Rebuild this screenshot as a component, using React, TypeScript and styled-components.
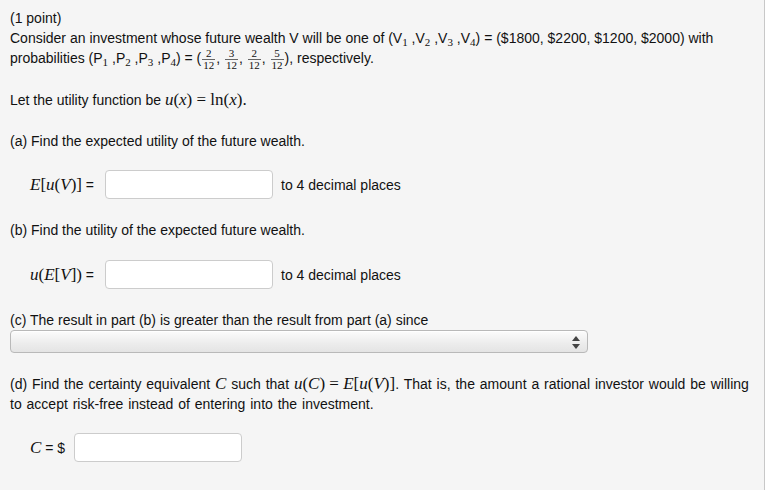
import React from 'react'
import styled, { createGlobalStyle } from 'styled-components'

const GlobalStyle = createGlobalStyle`
  html, body {
    margin: 0;
    padding: 0;
    background: #f5f5f5;
  }
`

const Page = styled.div`
  box-sizing: border-box;
  width: 765px;
  height: 490px;
  padding: 8px 0 0 10px;
  background: #f5f5f5;
  border-right: 1px solid #c8c8c8;
  font-family: 'Liberation Sans', Arial, sans-serif;
  font-size: 14px;
  color: #111;
  display: flex;
  flex-direction: column;
  overflow: hidden;
`

const Para = styled.div<{ $top?: number; $spread?: boolean }>`
  line-height: 20px;
  margin-top: ${({ $top }) => $top ?? 0}px;
  word-spacing: ${({ $spread }) => ($spread ? '1px' : 'normal')};
`

const FracLine = styled.div`
  height: 21px;
  line-height: 21px;
  white-space: nowrap;
`

const M = styled.span<{ $size?: number }>`
  font-family: 'Liberation Serif', 'Times New Roman', serif;
  font-style: italic;
  font-size: ${({ $size }) => $size ?? 17}px;
  word-spacing: normal;
`

const Rm = styled.span<{ $size?: number }>`
  font-family: 'Liberation Serif', 'Times New Roman', serif;
  font-size: ${({ $size }) => $size ?? 17}px;
  word-spacing: normal;
`

const Sub = styled.sub`
  font-family: 'Liberation Serif', 'Times New Roman', serif;
  font-size: 11px;
  vertical-align: -3px;
  line-height: 0;
`

const Frac = styled.span`
  display: inline-block;
  vertical-align: middle;
  text-align: center;
  font-family: 'Liberation Serif', 'Times New Roman', serif;
  font-size: 11px;
  line-height: 9px;
  margin: 0 1px;
`

const Num = styled.span`
  display: block;
  padding: 0 1px 1px;
  border-bottom: 1px solid #666;
`

const Den = styled.span`
  display: block;
  padding: 1px 1px 0;
`

const AnswerRow = styled.div<{ $top: number }>`
  display: flex;
  align-items: center;
  margin-top: ${({ $top }) => $top}px;
  padding-left: 20px;
  height: 29px;
`

const Label = styled.span<{ $width: number }>`
  width: ${({ $width }) => $width}px;
  white-space: nowrap;
`

const Field = styled.input`
  box-sizing: border-box;
  width: 168px;
  height: 29px;
  border: 1px solid #cccccc;
  border-radius: 4px;
  background: #fff;
  outline: none;
  margin-right: 8px;
`

const Hint = styled.span``

const Select = styled.div`
  box-sizing: border-box;
  position: relative;
  width: 578px;
  height: 23px;
  border: 1px solid #b9b9b9;
  border-radius: 4px;
  background: linear-gradient(#fcfcfc, #ececec 60%, #e4e4e4);
  box-shadow: inset 0 1px 0 #fff;
`

const Arrows = styled.svg`
  position: absolute;
  right: 7px;
  top: 5px;
`

const fractions = ['2', '3', '2', '5']

export default function App() {
  return (
    <>
      <GlobalStyle />
      <Page>
        <Para>
          (1 point)
          <br />
          Consider an investment whose future wealth V will be one of (V<Sub>1</Sub> ,V<Sub>2</Sub> ,V<Sub>3</Sub> ,V
          <Sub>4</Sub>) = ($1800, $2200, $1200, $2000) with
        </Para>
        <FracLine>
          probabilities (P<Sub>1</Sub> ,P<Sub>2</Sub> ,P<Sub>3</Sub> ,P<Sub>4</Sub>) = (
          {fractions.map((n, i) => (
            <React.Fragment key={i}>
              <Frac>
                <Num>{n}</Num>
                <Den>12</Den>
              </Frac>
              {i < fractions.length - 1 ? ', ' : ''}
            </React.Fragment>
          ))}
          ), respectively.
        </FracLine>

        <Para $top={21}>
          Let the utility function be <M>u</M>
          <Rm>(</Rm>
          <M>x</M>
          <Rm>) = ln(</Rm>
          <M>x</M>
          <Rm>).</Rm>
        </Para>

        <Para $top={21}>(a) Find the expected utility of the future wealth.</Para>

        <AnswerRow $top={19}>
          <Label $width={75}>
            <M>E</M>
            <Rm>[</Rm>
            <M>u</M>
            <Rm>(</Rm>
            <M>V</M>
            <Rm>)]</Rm> =
          </Label>
          <Field />
          <Hint>to 4 decimal places</Hint>
        </AnswerRow>

        <Para $top={21}>(b) Find the utility of the expected future wealth.</Para>

        <AnswerRow $top={20}>
          <Label $width={75}>
            <M>u</M>
            <Rm>(</Rm>
            <M>E</M>
            <Rm>[</Rm>
            <M>V</M>
            <Rm>])</Rm> =
          </Label>
          <Field />
          <Hint>to 4 decimal places</Hint>
        </AnswerRow>

        <Para $top={21}>(c) The result in part (b) is greater than the result from part (a) since</Para>
        <Select>
          <Arrows width="8" height="13" viewBox="0 0 8 13">
            <path d="M4 0 L8 5 L0 5 Z" fill="#444" />
            <path d="M4 13 L8 8 L0 8 Z" fill="#444" />
          </Arrows>
        </Select>

        <Para $top={21} $spread>
          (d) Find the certainty equivalent <M>C</M> such that <M>u</M>
          <Rm>(</Rm>
          <M>C</M>
          <Rm>) = </Rm>
          <M>E</M>
          <Rm>[</Rm>
          <M>u</M>
          <Rm>(</Rm>
          <M>V</M>
          <Rm>)]</Rm>. That is, the amount a rational investor would be willing
          <br />
          to accept risk-free instead of entering into the investment.
        </Para>

        <AnswerRow $top={19}>
          <Label $width={44}>
            <M>C</M> = $
          </Label>
          <Field />
        </AnswerRow>
      </Page>
    </>
  )
}
